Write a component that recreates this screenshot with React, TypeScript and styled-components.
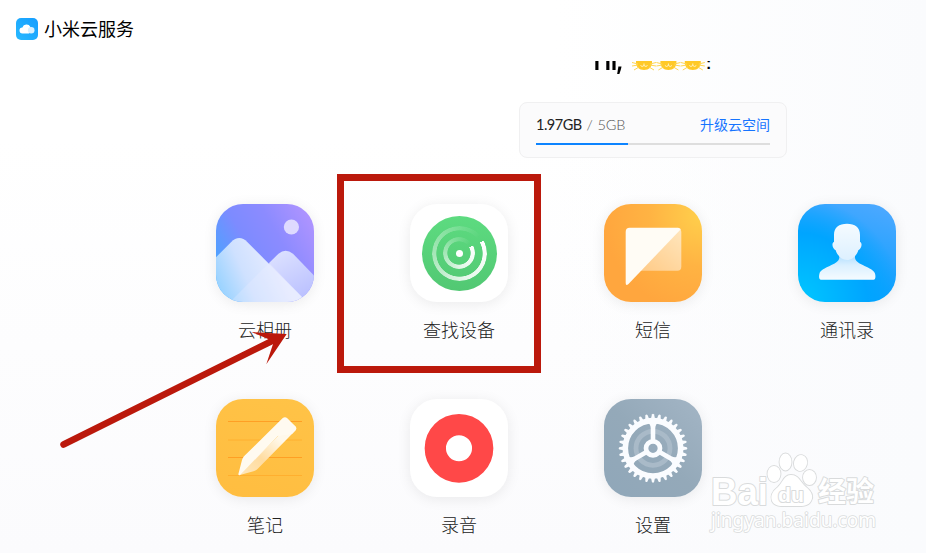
import React from "react";
import styled, { createGlobalStyle } from "styled-components";

const GlobalStyle = createGlobalStyle`
  * { box-sizing: border-box; }
  body {
    margin: 0;
    overflow: hidden;
    font-family: "Noto Sans CJK SC", sans-serif;
    background: #fff;
  }
`;

const Page = styled.div`
  position: relative;
  display: flex;
  flex-direction: column;
  width: 926px;
  height: 553px;
  overflow: hidden;
  background: linear-gradient(90deg, #fafbfd00 60%, #fafbfd 100%),
    linear-gradient(180deg, #fff 25%, #fbfbfd 100%);
`;

const Header = styled.header`
  display: flex;
  flex: none;
  align-items: center;
  gap: 6px;
  height: 61px;
  padding: 0 0 5px 15px;
`;

const Brand = styled.h1`
  margin: 0;
  padding-bottom: 1px;
  font-size: 18px;
  font-weight: 400;
  line-height: 26px;
  color: #000;
`;

const Scroller = styled.main`
  flex: 1;
  width: 1306px;
  overflow: hidden;
  display: flex;
  flex-direction: column;
  align-items: center;
`;

const Greeting = styled.div`
  display: flex;
  flex: none;
  height: 32px;
  margin-top: -20px;
  color: #000;
`;

const Word = styled.span`
  width: 39px;
  margin-top: 1px;
  font: 600 31px/32px "Noto Sans", sans-serif;
  letter-spacing: -1.5px;
  transform: scaleX(0.8);
  transform-origin: 0 50%;
`;

const Colon = styled.span`
  width: 7px;
  padding-top: 7px;
  font: 700 16px/32px "Liberation Sans", sans-serif;
`;

const StorageCard = styled.section`
  flex: none;
  width: 268px;
  height: 56px;
  margin-top: 29px;
  padding: 11px 16px;
  border: 1px solid #f0f0f1;
  border-radius: 8px;
  background: #fbfbfc;
`;

const StorageRow = styled.div`
  display: flex;
  justify-content: space-between;
  height: 20px;
  font-size: 14px;
  line-height: 20px;
`;

const Usage = styled.div`
  padding-top: 1px;
  font-family: Lato, sans-serif;
  font-size: 14.5px;
  letter-spacing: -0.5px;
  color: #222;
  white-space: pre;
`;

const Total = styled.span`
  font-weight: 300;
  letter-spacing: -0.1px;
  word-spacing: 1px;
  color: #555;
`;

const Upgrade = styled.a`
  color: #1674ff;
`;

const Track = styled.div`
  height: 2px;
  margin-top: 9px;
  background: #dedede;
`;

const Fill = styled.div`
  width: 39.4%;
  height: 100%;
  background: #0d84ff;
`;

const AppGrid = styled.div`
  display: grid;
  align-self: flex-start;
  grid-template-columns: repeat(4, 194px);
  grid-auto-rows: 195px;
  margin: 46.4px 0 0 168px;
`;

const AppItem = styled.div`
  display: flex;
  flex-direction: column;
  align-items: center;
`;

const Tile = styled.div<{ $bg: string }>`
  display: grid;
  width: 98px;
  height: 98px;
  border-radius: 27px;
  overflow: hidden;
  background: ${(p) => p.$bg};
  box-shadow: 0 2px 14px rgba(0, 0, 0, 0.08);

  > * { grid-area: 1 / 1; }
`;

const Label = styled.div`
  margin-top: 13.6px;
  font-size: 18px;
  font-weight: 300;
  line-height: 26px;
  color: #222;
`;

const Radar = styled.div`
  display: grid;
  place-self: center;
  place-items: center;
  width: 75px;
  height: 75px;
  border-radius: 50%;
  background: linear-gradient(#5ddb80, #52c873);

  > * { grid-area: 1 / 1; }
`;

const Sweep = styled.div<{ $size: number }>`
  width: ${(p) => p.$size}px;
  height: ${(p) => p.$size}px;
  border-radius: 50%;
  background: conic-gradient(from 62deg, #fff, rgba(255, 255, 255, 0.85) 30%, rgba(255, 255, 255, 0.5) 55%, rgba(255, 255, 255, 0.2) 80%, transparent 97%);
  mask: radial-gradient(closest-side, transparent calc(100% - 4.7px), #000 calc(100% - 4px));
`;

const Dot = styled.div`
  width: 7px;
  height: 7px;
  border-radius: 50%;
  background: #fff;
`;

const Highlight = styled.div`
  position: absolute;
  left: 337px;
  top: 174px;
  width: 204px;
  height: 199px;
  border: 7px solid #bb190c;
`;

const Overlay = styled.svg`
  position: absolute;
  left: 0;
  top: 0;
  pointer-events: none;
`;

const CloudLogo = () => (
  <svg width="23" height="23" viewBox="0 0 23 23">
    <defs>
      <linearGradient id="logo" x1="1" y1="0" x2="0" y2="1">
        <stop offset="0" stopColor="#159dff" />
        <stop offset="1" stopColor="#27b9ff" />
      </linearGradient>
    </defs>
    <rect x="1" y="1" width="22" height="22" rx="5" fill="url(#logo)" />
    <path d="M7.600 16.500a3 3 0 0 1-.2-6 4.300 4.300 0 0 1 8-.6c.6 2 .3 5-1.400 6.600z" fill="#fff" />
    <circle cx="16.200" cy="13.200" r="3.300" fill="#d8f0ff" />
  </svg>
);

const Faces = () => (
  <svg width="74" height="32" viewBox="0 0 74 32">
    {[12, 36.400, 60.800].map((x) => (
      <g key={x} transform={`translate(${x} 20)`}>
        <path d="M-8 0h16v1.500C8 6 5 9 0 9S-8 6-8 1.500z" fill="#ffc928" />
        <path d="M-12 1.500l6 1.500M-12 5l6-1M-10 9l5-3M12 1.500L6 3M12 5L6 4M10 9L5 6" stroke="#ffd653" strokeWidth="1" />
        <path d="M-3.500 4.500q1.500 2 3.500 0q2 2 3.500 0M0 2.500v2" fill="none" stroke="#fff3c4" strokeWidth="1" />
      </g>
    ))}
  </svg>
);

const Art = ({ children }: { children: React.ReactNode }) => (
  <svg width="98" height="98" viewBox="0 0 98 98">{children}</svg>
);

const Photos = () => (
  <Art>
    <defs>
      <linearGradient id="m1" gradientUnits="userSpaceOnUse" x1="0" y1="90" x2="62" y2="62">
        <stop offset="0" stopColor="#8fd0ff" />
        <stop offset=".5" stopColor="#cfe1ff" />
        <stop offset="1" stopColor="#e6ebff" />
      </linearGradient>
      <linearGradient id="m2" x1=".2" y1="0" x2=".7" y2="1">
        <stop offset="0" stopColor="#dde2ff" />
        <stop offset="1" stopColor="#b9bfff" />
      </linearGradient>
    </defs>
    <circle cx="75.400" cy="23" r="7.600" fill="#dedaff" />
    <path d="M53.300 58.700L62.500 49.700Q69.500 44 77 49.700L98 71.500V98H50z" fill="url(#m2)" />
    <path d="M0 53.300L15 38.200Q23.300 30 31.500 38.200L91 98H0z" fill="url(#m1)" />
    <path d="M53.300 58.700L14 98H91z" fill="#eef0ff" opacity=".25" />
  </Art>
);

const FindDevice = () => (
  <Radar>
    <Sweep $size={55} />
    <Sweep $size={32} />
    <Dot />
  </Radar>
);

const Messages = () => (
  <Art>
    <defs>
      <linearGradient id="fold" x1="1" y1="0" x2=".2" y2="1">
        <stop offset="0" stopColor="#ffe6bd" />
        <stop offset="1" stopColor="#ffcd8c" />
      </linearGradient>
    </defs>
    <path d="M76 25q1.300 1 1.300 3v34.700q0 4-4 4H36z" fill="url(#fold)" />
    <path d="M25.700 23.700H74q2 0 2.800 1.500L24.500 80q-2.800 2.500-2.800-1V27.700q0-4 4-4z" fill="#fffcf5" />
  </Art>
);

const Contacts = () => (
  <Art>
    <defs>
      <linearGradient id="body" x1="0" y1="0" x2="0" y2="1">
        <stop offset="0" stopColor="#9fd6ff" />
        <stop offset=".5" stopColor="#dbf0ff" />
        <stop offset="1" stopColor="#f5fbff" />
      </linearGradient>
      <linearGradient id="head" x1="0" y1="0" x2="0" y2="1">
        <stop offset="0" stopColor="#f5fbff" />
        <stop offset="1" stopColor="#ddf0ff" />
      </linearGradient>
    </defs>
    <path d="M41.300 47V54c-1 7-18 9-19.800 15.500-.7 2.500-.8 6.200 1.500 6.200h52.500c2.300 0 2.200-3.700 1.500-6.200C75 63 58 61 57 54V47z" fill="url(#body)" />
    <path d="M36 38V31c0-8 5-11.300 13-11.300S62 23 62 31v7c2.500.5 2 6.500-1.700 8.200C58.500 52 54 56 49 56s-9.500-4-11.300-9.800C34 44.500 33.500 38.500 36 38z" fill="url(#head)" />
  </Art>
);

const Notes = () => (
  <Art>
    <defs>
      <linearGradient id="side" x1="1" y1="0" x2="0" y2="1">
        <stop offset=".3" stopColor="#fff8ea" />
        <stop offset=".65" stopColor="#ffdca0" />
        <stop offset="1" stopColor="#ffe8bd" />
      </linearGradient>
    </defs>
    <path d="M12 22.500h74M12 58.500h74" stroke="#ff9f24" />
    <path d="M12 41h74M12 76.500h74" stroke="#ffa726" opacity=".65" />
    <path d="M75 24L80 28q.8 2-.6 3.500L41.500 70q-1.500 1.600-4 2.200L23 76.200z" fill="url(#side)" />
    <path d="M22.400 75L26 61q.6-2.200 2-3.700L66.500 19.200q2.500-2 4.800 0l8 8q1.800 2.200 0 4.400L76 35 62 37 24 76q-1.800.5-1.600-1z" fill="#fffaf0" />
  </Art>
);

const Recorder = () => (
  <Art>
    <circle cx="49" cy="49.300" r="23.700" fill="none" stroke="#ff4848" strokeWidth="21.300" />
  </Art>
);

const Settings = () => (
  <Art>
    <g transform="translate(49 49.300)" fill="none" stroke="#fafcff">
      <circle r="17" stroke="#a9bac8" strokeWidth="4.800" />
      <circle r="27.700" strokeWidth="5.600" />
      {Array.from({ length: 32 }, (_, i) => (
        <path key={i} d="M-2-29.500L-1.100-33.700Q0-35.200 1.100-33.700L2-29.500z" transform={`rotate(${i * 11.25})`} fill="#fafcff" stroke="none" />
      ))}
      {[0, 120, 240].map((a) => (
        <path key={a} d="M-5.500-26Q-2.300-24-2.300-20V-7H2.300V-20Q2.300-24 5.500-26z" transform={`rotate(${a})`} fill="#fafcff" stroke="none" />
      ))}
      <circle r="7" fill="#96abbc" strokeWidth="4.700" />
    </g>
  </Art>
);

const apps = [
  { name: "云相册", icon: <Photos />, bg: "linear-gradient(60deg, #2fb0ff 0%, #7d8bff 42%, #8c8bff 65%, #b796ff 100%)" },
  { name: "查找设备", icon: <FindDevice />, bg: "#fff" },
  { name: "短信", icon: <Messages />, bg: "radial-gradient(circle at 100% 10%, #ffd04c, #ffb343 40%, #ffa63e 75%)" },
  { name: "通讯录", icon: <Contacts />, bg: "radial-gradient(circle at 0% 100%, #00c8ff, #00a5ff 50%, transparent 75%), linear-gradient(200deg, #51a9ff, #0a9fff 75%)" },
  { name: "笔记", icon: <Notes />, bg: "linear-gradient(200deg, #ffc347, #ffbd40)" },
  { name: "录音", icon: <Recorder />, bg: "#fff" },
  { name: "设置", icon: <Settings />, bg: "linear-gradient(45deg, #90a7b9, #94a9b9 50%, #a3b5c5)" },
];

const Watermark = () => (
  <g fill="#fff" stroke="#d9dbdc" strokeWidth="2" paintOrder="stroke" strokeLinejoin="round">
    <text x="711" y="504.500" fontFamily="Liberation Sans, sans-serif" fontWeight="700" fontSize="38" textLength="57" lengthAdjust="spacingAndGlyphs">Bai</text>
    <g strokeWidth="1.800">
      <ellipse cx="774" cy="474" rx="6.500" ry="8" />
      <ellipse cx="785.500" cy="462" rx="6" ry="8.500" />
      <ellipse cx="800.500" cy="463" rx="6.500" ry="8" transform="rotate(15 800.500 463)" />
      <ellipse cx="809.500" cy="477.500" rx="6.500" ry="7.500" />
      <path d="M791 475c8 0 9 7 15 12 5 4 8 9 5 14-3 6-11 5-20 5s-16 1-19-5c-2-6 1-10 6-14 5-5 6-12 13-12z" />
    </g>
    <text x="778" y="502" fontFamily="Liberation Sans, sans-serif" fontWeight="700" fontSize="21" textLength="26" lengthAdjust="spacingAndGlyphs">du</text>
    <text x="818" y="502" fontFamily="Noto Sans CJK SC, sans-serif" fontWeight="700" fontSize="28" textLength="56">经验</text>
    <text x="711" y="527" fontFamily="Noto Sans, sans-serif" fontSize="19" strokeWidth="1.600" textLength="165" lengthAdjust="spacingAndGlyphs">jingyan.baidu.com</text>
  </g>
);

export default function App() {
  return (
    <Page>
      <GlobalStyle />
      <Header>
        <CloudLogo />
        <Brand>小米云服务</Brand>
      </Header>
      <Scroller>
        <Greeting>
          <Word>Hi,</Word>
          <Faces />
          <Colon>:</Colon>
        </Greeting>
        <StorageCard>
          <StorageRow>
            <Usage>1.97GB<Total> / 5GB</Total></Usage>
            <Upgrade>升级云空间</Upgrade>
          </StorageRow>
          <Track><Fill /></Track>
        </StorageCard>
        <AppGrid>
          {apps.map((app) => (
            <AppItem key={app.name}>
              <Tile $bg={app.bg}>{app.icon}</Tile>
              <Label>{app.name}</Label>
            </AppItem>
          ))}
        </AppGrid>
      </Scroller>
      <Highlight />
      <Overlay width="926" height="553" viewBox="0 0 926 553">
        <Watermark />
        <path d="M63.500 444.500L271 341.500" stroke="#bb190c" strokeWidth="6.500" strokeLinecap="round" />
        <path d="M251.500 332L286.700 334L266.300 364.300L273 344L268 339Z" fill="#bb190c" />
      </Overlay>
    </Page>
  );
}
